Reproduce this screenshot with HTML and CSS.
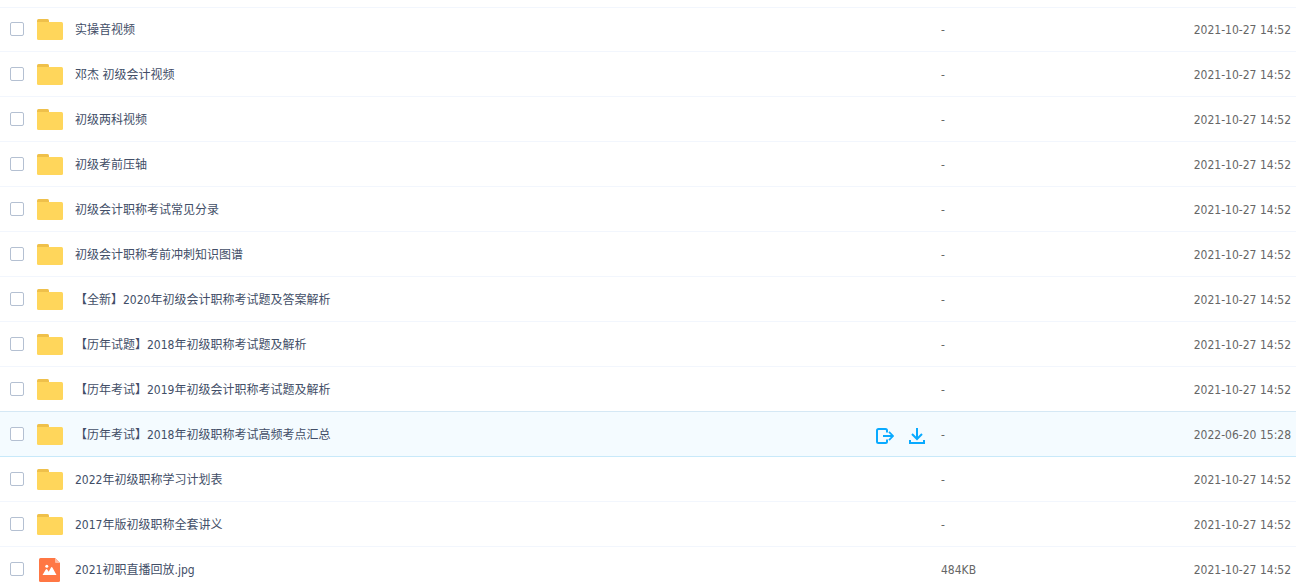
FILE: index.html
```
<!DOCTYPE html>
<html lang="zh-CN">
<head>
    <meta charset="UTF-8">
    <meta name="viewport" content="width=device-width, initial-scale=1.0">
    <title>文件列表</title>
    <link rel="stylesheet" href="styles.css">
</head>
<body>
    <!-- 图标 -->
    <svg class="sprite" aria-hidden="true">
        <symbol id="icon-folder" viewBox="0 0 26 21">
            <path fill="#EFC04A" d="M0 8V1.5Q0 0 1.5 0h9Q12 0 12 1.5V8z"/>
            <path fill="#FFD65B" d="M0 3h24.500q1.500 0 1.500 1.500v15q0 1.500-1.500 1.500h-23Q0 21 0 19.500z"/>
        </symbol>
        <symbol id="icon-image" viewBox="0 0 21 24">
            <path fill="#FF7744" d="M1.500 0H16l5 5v17.500q0 1.500-1.500 1.500h-18Q0 24 0 22.500v-21Q0 0 1.500 0z"/>
            <path fill="#FFBBA1" d="M16 0l5 5h-4q-1 0-1-1z"/>
            <circle fill="#fff" cx="7.800" cy="8.300" r="1.500"/>
            <path fill="#fff" d="M3.500 17l3.300-5.600q.7-1 1.400 0l1.500 2.300 2.300-4.200q.7-1 1.400 0L17.500 17z"/>
        </symbol>
        <symbol id="icon-save" viewBox="0 0 18 16">
            <g fill="none" stroke="#09AAFF" stroke-width="2">
                <path d="M11 4.500V2.500Q11 1 9.500 1h-7Q1 1 1 2.500v11Q1 15 2.500 15h7q1.500 0 1.500-1.500v-2"/>
                <path d="M7 8h10"/>
                <path stroke-width="1.800" d="M13 3.800L17 8l-4 4.200"/>
            </g>
        </symbol>
        <symbol id="icon-download" viewBox="0 0 16 16">
            <g fill="none" stroke="#09AAFF" stroke-width="2">
                <path d="M8 0v10.500M3 6l5 5 5-5"/>
                <path d="M1 12v3h14v-3"/>
            </g>
        </symbol>
    </svg>

    <table class="file-list">
        <tbody>
            <tr>
                <td class="check"><input type="checkbox" aria-labelledby="f1"></td>
                <td class="icon"><svg class="folder"><use href="#icon-folder"/></svg></td>
                <td class="name" id="f1">实操音视频</td>
                <td class="actions"></td>
                <td class="size">-</td>
                <td class="date">2021-10-27 14:52</td>
            </tr>
            <tr>
                <td class="check"><input type="checkbox" aria-labelledby="f2"></td>
                <td class="icon"><svg class="folder"><use href="#icon-folder"/></svg></td>
                <td class="name" id="f2">邓杰 初级会计视频</td>
                <td class="actions"></td>
                <td class="size">-</td>
                <td class="date">2021-10-27 14:52</td>
            </tr>
            <tr>
                <td class="check"><input type="checkbox" aria-labelledby="f3"></td>
                <td class="icon"><svg class="folder"><use href="#icon-folder"/></svg></td>
                <td class="name" id="f3">初级两科视频</td>
                <td class="actions"></td>
                <td class="size">-</td>
                <td class="date">2021-10-27 14:52</td>
            </tr>
            <tr>
                <td class="check"><input type="checkbox" aria-labelledby="f4"></td>
                <td class="icon"><svg class="folder"><use href="#icon-folder"/></svg></td>
                <td class="name" id="f4">初级考前压轴</td>
                <td class="actions"></td>
                <td class="size">-</td>
                <td class="date">2021-10-27 14:52</td>
            </tr>
            <tr>
                <td class="check"><input type="checkbox" aria-labelledby="f5"></td>
                <td class="icon"><svg class="folder"><use href="#icon-folder"/></svg></td>
                <td class="name" id="f5">初级会计职称考试常见分录</td>
                <td class="actions"></td>
                <td class="size">-</td>
                <td class="date">2021-10-27 14:52</td>
            </tr>
            <tr>
                <td class="check"><input type="checkbox" aria-labelledby="f6"></td>
                <td class="icon"><svg class="folder"><use href="#icon-folder"/></svg></td>
                <td class="name" id="f6">初级会计职称考前冲刺知识图谱</td>
                <td class="actions"></td>
                <td class="size">-</td>
                <td class="date">2021-10-27 14:52</td>
            </tr>
            <tr>
                <td class="check"><input type="checkbox" aria-labelledby="f7"></td>
                <td class="icon"><svg class="folder"><use href="#icon-folder"/></svg></td>
                <td class="name" id="f7">【全新】2020年初级会计职称考试题及答案解析</td>
                <td class="actions"></td>
                <td class="size">-</td>
                <td class="date">2021-10-27 14:52</td>
            </tr>
            <tr>
                <td class="check"><input type="checkbox" aria-labelledby="f8"></td>
                <td class="icon"><svg class="folder"><use href="#icon-folder"/></svg></td>
                <td class="name" id="f8">【历年试题】2018年初级职称考试题及解析</td>
                <td class="actions"></td>
                <td class="size">-</td>
                <td class="date">2021-10-27 14:52</td>
            </tr>
            <tr>
                <td class="check"><input type="checkbox" aria-labelledby="f9"></td>
                <td class="icon"><svg class="folder"><use href="#icon-folder"/></svg></td>
                <td class="name" id="f9">【历年考试】2019年初级会计职称考试题及解析</td>
                <td class="actions"></td>
                <td class="size">-</td>
                <td class="date">2021-10-27 14:52</td>
            </tr>
            <tr class="active">
                <td class="check"><input type="checkbox" aria-labelledby="f10"></td>
                <td class="icon"><svg class="folder"><use href="#icon-folder"/></svg></td>
                <td class="name" id="f10">【历年考试】2018年初级职称考试高频考点汇总</td>
                <td class="actions">
                    <div class="buttons">
                        <button type="button" aria-label="保存到网盘"><svg class="save"><use href="#icon-save"/></svg></button>
                        <button type="button" aria-label="下载"><svg class="download"><use href="#icon-download"/></svg></button>
                    </div>
                </td>
                <td class="size">-</td>
                <td class="date">2022-06-20 15:28</td>
            </tr>
            <tr>
                <td class="check"><input type="checkbox" aria-labelledby="f11"></td>
                <td class="icon"><svg class="folder"><use href="#icon-folder"/></svg></td>
                <td class="name" id="f11">2022年初级职称学习计划表</td>
                <td class="actions"></td>
                <td class="size">-</td>
                <td class="date">2021-10-27 14:52</td>
            </tr>
            <tr>
                <td class="check"><input type="checkbox" aria-labelledby="f12"></td>
                <td class="icon"><svg class="folder"><use href="#icon-folder"/></svg></td>
                <td class="name" id="f12">2017年版初级职称全套讲义</td>
                <td class="actions"></td>
                <td class="size">-</td>
                <td class="date">2021-10-27 14:52</td>
            </tr>
            <tr>
                <td class="check"><input type="checkbox" aria-labelledby="f13"></td>
                <td class="icon"><svg class="image"><use href="#icon-image"/></svg></td>
                <td class="name" id="f13">2021初职直播回放.jpg</td>
                <td class="actions"></td>
                <td class="size">484KB</td>
                <td class="date">2021-10-27 14:52</td>
            </tr>
        </tbody>
    </table>
</body>
</html>
```
FILE: styles.css
```
body {
    margin: 0;
    padding-top: 7px;
    background: #fff;
    color: #424e67;
    font-family: "DejaVu Sans Condensed", "Noto Sans CJK SC", sans-serif;
    font-size: 12px;
    line-height: 18px;
}

.sprite {
    display: none;
}

.file-list {
    width: 100%;
    table-layout: fixed;
    border-spacing: 0;
}

.file-list td {
    box-sizing: border-box;
    height: 45px;
    padding: 0;
    border-bottom: 1px solid #f2f6fd;
    vertical-align: middle;
    white-space: nowrap;
}

.file-list tr:first-child td {
    box-shadow: inset 0 1px #f2f6fd;
}

.file-list .check {
    width: 37px;
    padding-left: 10px;
}

.file-list .icon {
    width: 38px;
}

.file-list .name,
.file-list .size,
.file-list .date {
    padding-top: 2px;
}

.file-list .actions {
    width: 65px;
}

.file-list .size {
    width: 250px;
    color: #666;
}

.file-list .date {
    width: 105px;
    padding-right: 5px;
    color: #666;
    text-align: right;
}

input[type="checkbox"] {
    display: block;
    appearance: none;
    box-sizing: border-box;
    width: 14px;
    height: 14px;
    margin: 0;
    border: 1px solid #b4c0d2;
    border-radius: 2px;
    background: #fff;
}

input[type="checkbox"]:checked {
    border-color: #09aaff;
    background: #09aaff;
}

svg {
    display: block;
}

.folder {
    width: 26px;
    height: 21px;
}

.image {
    width: 21px;
    height: 24px;
    margin: 2px 0 0 2px;
}

/* 选中行 */
.file-list .active td {
    background: #f4fbff;
    border-bottom-color: #c8e9fa;
}

.file-list tr:has(+ .active) td {
    border-bottom-color: #d5e8f5;
}

.buttons {
    display: flex;
    gap: 15px;
    padding-top: 3px;
}

.buttons button {
    padding: 0;
    border: none;
    background: none;
    cursor: pointer;
}

.save {
    width: 18px;
    height: 16px;
}

.download {
    width: 16px;
    height: 16px;
}
```
